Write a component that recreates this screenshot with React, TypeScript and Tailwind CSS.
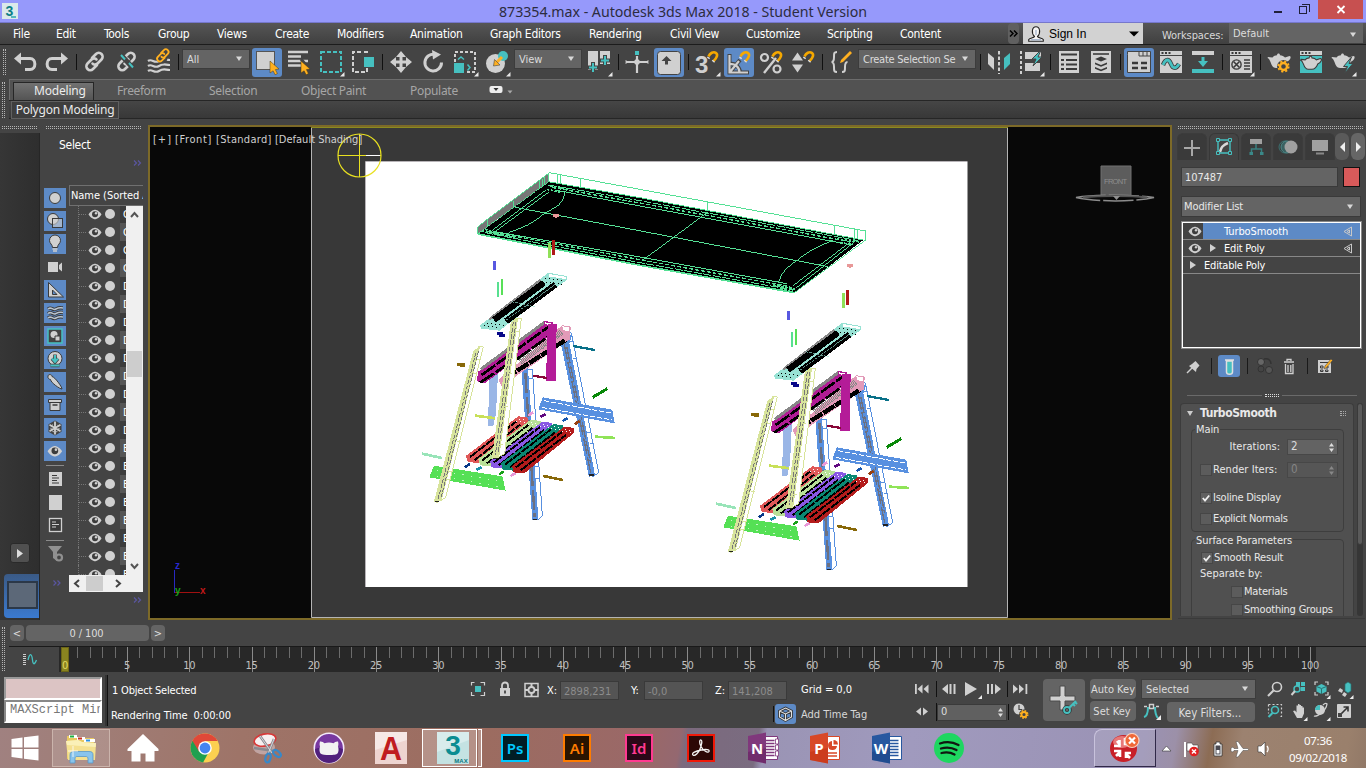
import React from "react";

type Kids = { children?: React.ReactNode };

const UI = "font-['DejaVu_Sans_Condensed','DejaVu_Sans','Noto_Sans',sans-serif]";
const SEG = "font-['Noto_Sans','Open_Sans',sans-serif]";

const G = "#d0d0d0";
const T = "#46c0c0";
const O = "#ffb020";
const D = "#3a3a3a";

/* ---------- small helpers ---------- */

const Tool = ({ children, on, fly }: Kids & { on?: boolean; fly?: boolean }) => (
  <div className="flex h-8 w-8 shrink-0 items-center justify-center">
    <svg width="32" height="32" viewBox="0 0 32 32" fill="none">
      {on && <rect x="1" y="2" width="30" height="29" rx="3" fill="#5d8ac6" />}
      {children}
      {fly && <path d="M29.500 26v4.500H25z" fill="#e8e8e8" />}
    </svg>
  </div>
);

const Sep = () => (
  <div className="flex h-8 w-1.5 shrink-0 items-center justify-center">
    <div className="h-4 w-px bg-[#101010]" />
  </div>
);

const Caret = () => (
  <svg width="8" height="6" viewBox="0 0 8 6" className="shrink-0">
    <path d="M1 0.500h6L4 5z" fill="#d8d8d8" />
  </svg>
);

const Combo = ({ label, box, tight }: { label: string; box: string; tight?: boolean }) => (
  <div className={`flex shrink-0 items-center justify-between overflow-hidden border border-[#3c3c3c] bg-[#646464] pl-[4px] pr-[6px] text-[11px] text-[#dcdcdc] ${UI} ${box}`}>
    <span className={`whitespace-nowrap pt-0.5 ${tight ? "tracking-[-0.25px]" : ""}`}>{label}</span>
    <Caret />
  </div>
);

const GripH = ({ box }: { box: string }) => (
  <div className={`h-[3px] shrink-0 border-y border-dotted border-[#b4b4b4] ${box}`} />
);
const GripV = ({ box }: { box: string }) => (
  <div className={`w-[3px] shrink-0 border-x border-dotted border-[#b4b4b4] ${box}`} />
);

const EyeShape = () => (
  <>
    <path d="M0.500 5.500C3 1.500 6 .8 7 .8s4 .7 6.500 4.700C11 9.500 8 10.200 7 10.200S3 9.500 .5 5.500z" fill={G} />
    <circle cx="7" cy="5.200" r="3" fill="#3c3c3c" />
    <circle cx="8" cy="4.200" r="1.200" fill={G} />
  </>
);
const Eye = () => (
  <svg width="14" height="11" viewBox="0 0 14 11" className="shrink-0">
    <EyeShape />
  </svg>
);

/* ---------- title and menu ---------- */

const TitleBar = () => (
  <div className="flex h-[23px] shrink-0 items-start border-b border-[#7678cc] bg-[#9699fb]">
    <div className="flex w-[200px] pl-0.5 pt-[3px]">
      <svg width="16" height="16" viewBox="0 0 16 16">
        <rect width="16" height="16" fill="#dbe9ea" />
        <text x="3.500" y="12.500" fontSize="14" fontWeight="bold" fontFamily="Liberation Sans" fill="#0e7f86">3</text>
        <path d="M9 14h5" stroke="#2ca6ac" strokeWidth="1.500" />
      </svg>
    </div>
    <div className={`flex-1 text-center text-[14.2px] leading-[23px] tracking-[-0.02px] text-[#2c2c40] ${SEG}`}>
      873354.max - Autodesk 3ds Max 2018 - Student Version
    </div>
    <div className="flex w-[200px] justify-end">
      <svg width="96" height="19" viewBox="0 0 96 19" shapeRendering="crispEdges">
        <path d="M4 12h8" stroke="#20203a" strokeWidth="2" />
        <path d="M31.500 4.500h8v7M29.500 6.500h7v7h-7z" stroke="#20203a" fill="none" />
        <rect x="48" width="45" height="19" fill="#c75050" />
        <path d="M67.500 6l7 7m0-7l-7 7" stroke="#fff" strokeWidth="1.800" shapeRendering="auto" />
      </svg>
    </div>
  </div>
);

const menus: [string, string][] = [
  ["File", "w-[43px]"], ["Edit", "w-[48px]"], ["Tools", "w-[54px]"], ["Group", "w-[59px]"],
  ["Views", "w-[58px]"], ["Create", "w-[62px]"], ["Modifiers", "w-[73px]"], ["Animation", "w-[80px]"],
  ["Graph Editors", "w-[99px]"], ["Rendering", "w-[81px]"], ["Civil View", "w-[76px]"],
  ["Customize", "w-[81px]"], ["Scripting", "w-[73px]"], ["Content", "w-[60px]"],
];

const MenuBar = () => (
  <div className={`flex h-[22px] shrink-0 border-b border-[#1c1c1c] bg-linear-to-b from-[#565656] to-[#404040] pl-[13px] text-[12px] text-white ${UI}`}>
    {menus.map(([m, w]) => (
      <div key={m} className={`shrink-0 whitespace-nowrap leading-[23px] tracking-[-0.28px] ${w}`}>{m}</div>
    ))}
    <div className="ml-[48px] flex w-[11px] items-center justify-center rounded-sm bg-[#606060]">
      <svg width="9" height="7" viewBox="0 0 9 7"><path d="M1 .5l3 3-3 3M5 .5l3 3-3 3" stroke="#000" strokeWidth="1.500" fill="none" /></svg>
    </div>
    <div className="ml-[4px] flex w-[120px] items-center bg-[#d2d2d2] pl-[5px] pr-1 font-['Liberation_Sans',sans-serif] text-[12px] text-black">
      <svg width="16" height="16" viewBox="0 0 16 16">
        <path d="M.7 15.200v-1.700C2 12 6 12 6.500 10.500 3 7 4 .8 8 .8s5 6.200 1.500 9.700c.5 1.500 4.500 1.500 5.800 3v1.700z" fill="#f6f6f6" stroke="#222" strokeWidth="1.100" />
        <path d="M3 13.800h10M8 4v5" stroke="#8ba0c0" />
      </svg>
      <span className="ml-[5px] flex-1 pt-px">Sign In</span>
      <svg width="10" height="6" viewBox="0 0 10 6"><path d="M0 .5h10L5 5.500z" fill="#000" /></svg>
    </div>
    <div className="w-[86px] pl-[19px] text-[11px] leading-[25px] text-[#d8d8d8] tracking-[-0.1px]">Workspaces:</div>
    <div className="flex h-[20px] w-[134px] items-center justify-between bg-[#646464] pl-1 pr-1.5 pt-[3px] text-[11px] text-[#dcdcdc]">
      <span>Default</span>
      <Caret />
    </div>
  </div>
);

/* ---------- main toolbar ---------- */

const Magnet = ({ x = 0, y = 0 }: { x?: number; y?: number }) => (
  <g transform={`translate(${x} ${y})`}>
    <path d="M1.500 5.500C3 2 6.500 .3 8.800 1.800s1.500 4.500-2.300 8.400" stroke="#f5a800" strokeWidth="2.600" />
    <path d="M.3 6.200l2.400 1.400M5.200 9.200l2.400 2" stroke="#ddd" strokeWidth="1.400" />
  </g>
);

const Link = ({ c = G, x = 0, y = 0, s = 1 }: { c?: string; x?: number; y?: number; s?: number }) => (
  <g transform={`translate(${x} ${y}) scale(${s})`} stroke={c} strokeWidth="2.600" strokeLinecap="round">
    <path d="M13 12l4-4c1.500-1.500 4-1.500 5.500 0s1.500 4 0 5.500l-4 4c-1.500 1.500-4 1.500-5 0" />
    <path d="M19 20l-4 4c-1.500 1.500-4 1.500-5.500 0s-1.500-4 0-5.500l4-4c1.500-1.500 4-1.500 5 0" transform="translate(-1 -1)" />
  </g>
);

const Cursor = ({ x, y }: { x: number; y: number }) => (
  <path transform={`translate(${x} ${y})`} d="M0 0l9 8-3.600.6 2 4-2.300 1.200-2-4L0 12z" fill={O} stroke="#4a3a10" strokeWidth=".5" />
);

const Teapot = () => (
  <path d="M5 11l4.500.5c1-1.500 3-2 4.500-2.200 0-2.300 3-2.300 3 0 2 .2 4 1 5 2.200l4.500-1.500c2.300.3 1 4.500-3 6-.7 3-3.500 6-6.500 6h-4c-3 0-4.500-3-5.500-6-1-2.500-1.500-3.500-3-4z" fill={G} />
);

const MainToolbar = () => (
  <div className="flex h-[34px] shrink-0 items-start bg-[#444] pl-[3px] pt-px">
    <GripV box="mr-[3px] mt-[3px] h-[26px]" />
    <Tool><path d="M9 12.500h12c6.500 0 6.500 11 0 11h-5" stroke={G} strokeWidth="3" /><path d="M5 12.500l7-6v12z" fill={G} /></Tool>
    <Tool><path d="M23 12.500H11c-6.500 0-6.500 11 0 11h5" stroke={G} strokeWidth="3" /><path d="M27 12.500l-7-6v12z" fill={G} /></Tool>
    <Sep />
    <Tool><Link /></Tool>
    <Tool><Link /><path d="M10 9l12 13" stroke="#444" strokeWidth="5" /><path d="M10 9l4 4.500M18 17l4 4.500" stroke={T} strokeWidth="2" /></Tool>
    <Tool>
      <path d="M5 15c4-3 6 3 11 0s6-1 11-1M5 20c4-3 6 3 11 0s6-1 11-1M5 25c4-3 6 3 11 0s6-1 11-1" stroke={G} strokeWidth="2.200" />
      <circle cx="19" cy="12" r="5.500" fill="#444" /><Link c={O} x={9} y={-1.500} s={0.7} />
    </Tool>
    <Sep />
    <Combo label="All" box="mx-px mt-[3px] h-5 w-[68px]" />
    <Tool on><rect x="5.500" y="5.500" width="18" height="18" fill={G} stroke="#555" /><Cursor x={19} y={15} /></Tool>
    <Tool><path d="M5 6h20M5 10.500h13M5 15h20M5 19.500h13" stroke={G} strokeWidth="2.600" /><path d="M18 13l9 11" stroke="#444" strokeWidth="3" /><Cursor x={18} y={15} /></Tool>
    <Tool fly><rect x="6" y="6" width="20" height="20" stroke={T} strokeWidth="2" strokeDasharray="4 2" /></Tool>
    <Tool><path d="M14 6H6v20h14v-4M17 6h3v3" stroke={G} strokeWidth="2" strokeDasharray="4 2" /><rect x="17" y="11" width="10" height="10" fill={T} /></Tool>
    <Sep />
    <Tool><path d="M16 7v18M7 16h18" stroke={G} strokeWidth="3" /><path d="M16 5l5 6h-10zM16 27l5-6h-10zM5 16l6-5v10zM27 16l-6-5v10z" fill={G} /></Tool>
    <Tool><path d="M18 8.500a8.300 8.300 0 1 0 6.500 8" stroke={G} strokeWidth="3" /><path d="M15 4l9 4.500-8 5z" fill={G} /></Tool>
    <Tool fly><rect x="6" y="6" width="20" height="20" stroke={G} strokeWidth="2" strokeDasharray="3 2" /><path d="M4 16h12v12H4z" fill="#444" /><rect x="5" y="17" width="10" height="10" fill={T} /><path d="M9 13.500l3-2.500 3 2.500M18.500 18.500l2.500 3-2.500 3" stroke={T} strokeWidth="1.500" /></Tool>
    <Tool fly><circle cx="14.500" cy="17.500" r="9.500" fill={G} /><circle cx="22" cy="10" r="5" fill={T} /><path d="M21 11l-6 6" stroke={O} strokeWidth="3" /><path d="M12.500 20l1-6.500 5.500 5.500z" fill={O} stroke="#444" strokeWidth=".6" /></Tool>
    <Combo label="View" box="mx-px mt-[3px] h-5 w-[68px]" />
    <Tool fly><path d="M5 5h10v19H5zM17 5h10v13H17z" fill={G} /><path d="M10 16v11M5 21.500h11M22 9v11M17 14.500h11" stroke="#444" strokeWidth="4" /><path d="M10 17v9M6 21.500h8M22 10v9M18 14.500h8" stroke={T} strokeWidth="2" /></Tool>
    <Sep />
    <Tool><path d="M5 16h22M16 10v17" stroke={G} strokeWidth="2.200" /><path d="M14 14h4v4h-4zM5 14v4M27 14v4" fill={G} stroke={G} strokeWidth=".8" /><rect x="14" y="5" width="4" height="4" fill={T} /></Tool>
    <Tool on><rect x="4.500" y="5.500" width="23" height="23" rx="3" fill={G} stroke="#444" /><path d="M13.500 10l5 5h-3.500v3.500h-3v-3.500H8.500z" fill="#444" /></Tool>
    <Sep />
    <Tool fly><text x="4" y="27" fontSize="24" fontWeight="bold" fontFamily="Liberation Sans" fill={G}>3</text><Magnet x={16} y={5} /></Tool>
    <Tool on><path d="M6.500 8v18.500H26M7 26L17 14M6.500 17.500c6-.5 10.500 4 10.500 9" stroke="#444" strokeWidth="4" /><path d="M6.500 9v17.500H25M7 26L16 15M6.500 18c6-.5 10 3.500 10 8.500" stroke={G} strokeWidth="2.200" /><Magnet x={16} y={5} /></Tool>
    <Tool><circle cx="9.500" cy="11.500" r="3.500" stroke={G} strokeWidth="2.200" /><circle cx="22" cy="23" r="3.500" stroke={G} strokeWidth="2.200" /><path d="M21 12L9 27" stroke={G} strokeWidth="2.400" /><Magnet x={16} y={5} /></Tool>
    <Tool><path d="M5 14.500l5.500-8 5.500 8zM5 18.500l5.500 8 5.500-8z" fill={G} /><Magnet x={16} y={5} /></Tool>
    <Sep />
    <Tool><path d="M12 6c-3 0-3 1-3 5 0 3-1 5-2.500 5C8 16 9 18 9 21c0 4 0 5 3 5M17 26c3 0 3-1 3-5 0-3 1-5 2.500-5" stroke={G} strokeWidth="2" /><path d="M15 17l1-3 9-9 2 2-9 9z" fill={O} /></Tool>
    <Combo label="Create Selection Se" tight box="mx-px mt-[3px] h-5 w-[118px]" />
    <Sep />
    <Tool><path d="M5 7l6 5v12l-6-6z" fill={G} /><path d="M16 5v23" stroke={G} strokeWidth="2" strokeDasharray="3.500 2" /><path d="M27 7l-6 5v12l6-6z" fill={T} /></Tool>
    <Tool fly><path d="M6 5v23" stroke={G} strokeWidth="2" strokeDasharray="3 2" /><path d="M10 6h16v7H10zM10 17h15v8H10z" fill={G} /><path d="M26 4l-9 9h4l-3 7 9-9h-4z" fill={T} stroke="#444" strokeWidth="1" /></Tool>
    <Sep />
    <Tool><rect x="6" y="5" width="20" height="22" fill={G} /><path d="M8 8.500h16M8 14h3M13 14h11M8 18.500h3M13 18.500h11M8 23h3M13 23h11" stroke={D} strokeWidth="2" /></Tool>
    <Tool><rect x="6" y="5" width="20" height="22" fill={G} /><path d="M8 8h16" stroke={D} strokeWidth="1.600" /><path d="M16 10.500l6 2.500-6 2.500-6-2.500zM10 16.500l6 2.500 6-2.500v1.700l-6 2.500-6-2.500zM10 21l6 2.500 6-2.500v1.700l-6 2.500-6-2.500z" fill={D} /></Tool>
    <Sep />
    <Tool on><path d="M4.500 8.500V5.500h23v21h-23z" fill={G} stroke="#444" /><path d="M16 6v4h12M20 6v4M24 6v4" stroke="#444" /><path d="M9 17h6M18 17h6M9 22h6M18 22h6" stroke={D} strokeWidth="2.400" /></Tool>
    <Tool><path d="M5 5h22v4H5zM5 10h22v17H5z" fill={G} /><path d="M6.500 7h2M10 7h2M13.500 7h2" stroke={D} strokeWidth="2" /><path d="M8 19c3-7 6-6 8-1s5 5 8 0" stroke={D} strokeWidth="4.500" /><path d="M8 19c3-7 6-6 8-1s5 5 8 0" stroke={T} strokeWidth="2.800" /></Tool>
    <Tool><path d="M5 5h22v4H5z" fill={G} /><path d="M5 23h22v4H5z" fill={T} /><path d="M14.500 11h3v4h3.500l-5 6-5-6h3.500z" fill={T} /></Tool>
    <Sep />
    <Tool fly><path d="M5 5h22v4H5zM5 10h22v17H5z" fill={G} /><path d="M6.500 7h2M10 7h2M13.500 7h2" stroke={D} strokeWidth="2" /><circle cx="11.500" cy="18.500" r="4.600" fill={G} stroke={D} strokeWidth="1.400" /><path d="M8.500 15.500l6 6m0-6l-6 6" stroke={D} strokeWidth="1.600" /><path d="M19 14h6M19 17h6M19 20h6M19 23h6" stroke={D} strokeWidth="1.400" /></Tool>
    <Sep />
    <Tool><Teapot /><circle cx="20.500" cy="20.500" r="6.500" fill="#444" /><circle cx="20.500" cy="20.500" r="3.500" stroke={O} strokeWidth="2.400" /><circle cx="20.500" cy="20.500" r="5.200" stroke={O} strokeWidth="1.800" strokeDasharray="2.100 2" /></Tool>
    <Tool><path d="M5 5h22v4H5z" fill={G} /><path d="M5 10h22v17H5z" fill={T} /><path d="M6.500 7h2M10 7h2M13.500 7h2" stroke={D} strokeWidth="2" /><g transform="translate(1.600 3.500) scale(.9)" stroke={D} strokeWidth="1.200"><Teapot /></g></Tool>
    <Tool fly><Teapot /><path d="M24.500 11l-8 9.500h4l-3 7 8.500-10h-4z" fill={T} stroke="#444" strokeWidth="1" /></Tool>
  </div>
);

/* ---------- ribbon ---------- */

const Ribbon = () => (
  <div className={`flex h-[46px] shrink-0 bg-[#444] text-[12px] ${SEG}`}>
    <GripV box="ml-0.5 mt-[3px] h-[36px]" />
    <div className="ml-1 flex h-[40px] flex-1 flex-col">
      <div className="flex h-[21px] items-end border-l border-t border-[#6c6c6c] bg-[#525252] pl-[3px] leading-[18px] text-[#a6a6a6]">
        <div className="h-[18px] w-[81px] border-x border-t border-[#262626] bg-linear-to-b from-[#727272] to-[#545454] pl-5 leading-[16px] text-[#ececec] tracking-[-0.2px]">Modeling</div>
        <div className="w-[92px] pl-[23px] tracking-[-0.4px]">Freeform</div>
        <div className="w-[92px] pl-[23px] tracking-[-0.3px]">Selection</div>
        <div className="w-[109px] pl-[23px] tracking-[-0.3px]">Object Paint</div>
        <div className="w-[102px] pl-[23px] tracking-[-0.3px]">Populate</div>
        <svg width="24" height="18" viewBox="0 0 24 18">
          <rect x="0.500" y="4" width="13" height="7" rx="2" fill="#eee" /><path d="M4.500 6h5L7 9z" fill="#333" /><path d="M18.500 8.500h5L21 11.500z" fill="#aaa" />
        </svg>
      </div>
      <div className="flex h-[19px] border-y border-[#262626] bg-linear-to-b from-[#464646] to-[#383838]">
        <div className="ml-0.5 h-[18px] w-[108px] border border-[#606060] bg-[#3e3e3e] text-center leading-[16px] text-[#eaeaea] tracking-[-0.22px]">Polygon Modeling</div>
      </div>
    </div>
  </div>
);

/* ---------- scene explorer ---------- */

const filters: [boolean, React.ReactNode][] = [
  [true, <circle cx="11" cy="10" r="5.500" fill={G} stroke={D} />],
  [true, <><circle cx="9" cy="8" r="5.500" fill={G} stroke={D} /><rect x="8.500" y="7.500" width="10" height="9" fill={G} fillOpacity=".6" stroke={D} /></>],
  [true, <><path d="M8.500 13.500c0-3-3-4-3-7a5.500 5.500 0 0 1 11 0c0 3-3 4-3 7z" fill={G} stroke={D} /><path d="M8.500 15h5M9 17h4" stroke={G} strokeWidth="1.500" /></>],
  [false, <path d="M4 5h10v10H4zM15 8l3-2.500v9L15 12z" fill={G} />],
  [true, <><path d="M4.500 2.500v14.500h15z" fill={G} stroke={D} /><path d="M8.500 10v4.500h4.500z" fill="#5d8ac6" stroke={D} /></>],
  [true, <path d="M4 6c4-3 4 2 8 0s4-1 7-1M4 10.500c4-3 4 2 8 0s4-1 7-1M4 15c4-3 4 2 8 0s4-1 7-1" stroke={D} strokeWidth="3.400" />],
  [true, <><rect x="4" y="3" width="14" height="14" fill="#444" stroke={T} strokeWidth="1.500" /><circle cx="10" cy="8.500" r="3.500" fill={G} /><path d="M11 10h5v5h-5z" fill={G} stroke={D} /></>],
  [true, <><circle cx="11" cy="9.500" r="7" fill={G} stroke={D} /><path d="M11 5.500v7M8 9.500l3 3.500 3-3.500M6.500 16.500h9" stroke="#444" strokeWidth="3.600" /><path d="M11 6v7M8 9.500l3 3.500 3-3.500M6.500 16.500h9" stroke={T} strokeWidth="2" /></>],
  [true, <path d="M4 4c0-2 4-2 4 .5C11 5 18 15 18 17c-2 0-11-6-11.500-9.500C5 7.500 3.500 6 4 4z" fill={G} stroke={D} />],
  [true, <><path d="M4.500 4.500h13v3h-13zM6 7.500h10v8H6z" fill={G} stroke={D} /><path d="M8.500 10h5" stroke={D} strokeWidth="1.500" /></>],
  [true, <><path d="M11 2.500l6.500 3.700v7.600L11 17.500l-6.500-3.700V6.200z" fill="#444" /><path d="M11 3.500v13M5.500 6.800l11 6.400M16.500 6.800l-11 6.400" stroke={G} strokeWidth="1.800" /><circle cx="11" cy="10" r="4" stroke={G} strokeDasharray="2 1.500" /></>],
  [true, <g transform="translate(3 4) scale(1.120)"><EyeShape /></g>],
];

const Chev2 = ({ box }: { box: string }) => (
  <svg width="9" height="6" viewBox="0 0 9 6" className={box}><path d="M1 .5L3.500 3 1 5.500M5 .5L7.500 3 5 5.500" stroke="#5a56a0" fill="none" strokeWidth="1.200" /></svg>
);

const rowNames = "GCCCDDDDDDDDDEEEEEEEE".split("");

const SceneExplorer = () => (
  <div className={`flex w-[108px] shrink-0 flex-col bg-[#444] ${UI}`}>
    <GripH box="ml-1.5 mt-px w-[95px]" />
    <div className="mt-[8px] pl-[19px] text-[12px] leading-4 tracking-[-0.3px] text-white">Select</div>
    <Chev2 box="ml-[93px] mt-[7px]" />
    <div className="mt-[19px] flex">
      <div className="ml-1 mt-[3px] flex w-[22px] flex-col gap-[3px]">
        {filters.map(([on, shape], i) => (
          <div key={i} className={`h-5 w-[22px] ${on ? "bg-[#5d8ac6]" : ""}`}>
            <svg width="22" height="20" viewBox="0 0 22 20" fill="none">
              {shape}
              {i === 5 && <path d="M4 6c4-3 4 2 8 0s4-1 7-1M4 10.500c4-3 4 2 8 0s4-1 7-1M4 15c4-3 4 2 8 0s4-1 7-1" stroke="#b8c4d0" strokeWidth="1.500" />}
            </svg>
          </div>
        ))}
        <svg width="22" height="124" viewBox="0 0 22 124" fill="none" className="-mt-px">
          <path d="M2 2.500h18M2 77.500h18" stroke="#8a8a8a" />
          <path d="M5 9h13v14H5zM5 32h13v15H5z" fill={G} />
          <path d="M8 12.500h5M8 15h7M8 17.500h5M8 20h7" stroke={D} />
          <rect x="5.500" y="55.500" width="12" height="13" fill="#3a3a3a" stroke={G} strokeWidth="1.300" />
          <path d="M8 59h4M8 61.500h7M8 64h4" stroke={G} />
          <path d="M4 83h14l-5 6v9l-4-3v-6z" fill="#909090" /><circle cx="15" cy="94.500" r="3" stroke="#909090" strokeWidth="2.200" fill="#444" />
          <path d="M9.500 117.500l2.500 2.500-2.500 2.500M13.500 117.500l2.500 2.500-2.500 2.500" stroke="#5a56a0" strokeWidth="1.200" />
        </svg>
      </div>
      <div className="ml-[3px] flex w-[74px] flex-col">
        <div className="flex h-[21px] items-center overflow-hidden whitespace-nowrap border border-r-0 border-[#707070] bg-[#444] pl-px pt-px text-[11px] text-white tracking-[-0.050px]">
          <span>Name (Sorted A</span>
        </div>
        <div className="flex h-[369px]">
          <div className="flex w-[57px] flex-col overflow-hidden">
            <div className="-mt-px flex flex-col">
              {rowNames.map((c, i) => (
                <div key={i} className="flex h-[18px] shrink-0 items-center text-[11px] leading-[19px] text-white">
                  <div className="ml-[9px] h-[18px] w-2 shrink-0 border-l border-dotted border-[#777]">
                    <div className="mt-[9px] border-t border-dotted border-[#777]" />
                  </div>
                  <div className="ml-[2px] flex shrink-0"><Eye /></div>
                  <div className="ml-[3px] size-[10px] shrink-0 rounded-full bg-[#d0d0d0]" />
                  <div className={`ml-[5px] h-[18px] w-2.5 shrink-0 pl-[3px] ${i % 2 ? "bg-[#555]" : "bg-[#3c3c3c]"}`}>{c}</div>
                </div>
              ))}
            </div>
          </div>
          <div className="flex w-[17px] flex-col bg-[#f0f0f0]">
            <svg width="17" height="17" viewBox="0 0 17 17"><path d="M5 11l3.500-4 3.500 4" stroke="#555" strokeWidth="2" fill="none" /></svg>
            <div className="ml-px mt-[128px] h-[26px] w-[15px] bg-[#cdcdcd]" />
            <svg width="17" height="17" viewBox="0 0 17 17" className="mt-auto"><path d="M5 6l3.500 4L12 6" stroke="#555" strokeWidth="2" fill="none" /></svg>
          </div>
        </div>
        <div className="flex h-[17px] items-center bg-[#f0f0f0]">
          <svg width="17" height="17" viewBox="0 0 17 17"><path d="M10 5L6 8.500l4 3.500" stroke="#444" strokeWidth="2" fill="none" /></svg>
          <div className="h-[15px] w-[17px] bg-[#cdcdcd]" />
          <svg width="17" height="17" viewBox="0 0 17 17" className="ml-[6px]"><path d="M7 5l4 3.500L7 12" stroke="#444" strokeWidth="2" fill="none" /></svg>
        </div>
        <Chev2 box="ml-[64px] mt-[5px]" />
      </div>
    </div>
  </div>
);

/* ---------- viewport ---------- */

const TableTop = () => (
  <g>
    <path d="M205 222L415 65 690 113 1360 240 1153 398 690 316z" fill="#000" />
    <path d="M418 38L203 200v22L415 66z" fill="#777" />
    <g stroke="#55e095" strokeWidth="3" fill="none">
      <path d="M203 222v-22L418 38 1367 213v27L1153 398" />
      <path d="M1153 398L690 316 203 222" strokeWidth="5" />
      <path d="M415 38v27L690 113 1360 240" />
      <path d="M435 90L690 138l600 110M250 214L690 291l440 80" />
      <path d="M415 75L690 122 1345 242M225 218L690 308l460 82" strokeDasharray="24 5" />
      <path d="M425 82L690 129l640 118M235 214L690 299l450 81" strokeWidth="4" strokeDasharray="12 6" />
      <path d="M315 142L640 203l615 117M895 155L695 303" />
      <path d="M465 95c-6 40-25 45-62 65-40 35-60 40-105 57M1270 240c-50 22-70 30-110 62-40 28-45 40-55 66" />
      <path d="M408 90L245 212M418 95L255 215M1322 245L1148 378M1332 247L1158 384" />
      <path d="M205 220L415 66" strokeDasharray="20 4" />
      <path d="M443 44v26M451 45v26M511 55v26M892 127v26M1275 196v26M1333 208v26M1342 210v26M232 180v22M310 122v22M390 61v24M397 56v24M405 50v24" />
      <path d="M215 212l100 22M225 208l60 22M1280 236l70 10M1290 248l40 6M1090 375l66 12M1110 386l40 8M420 78l60 12M410 88l40 8" strokeWidth="5" strokeDasharray="8 4" />
    </g>
  </g>
);

const slats: [string, number, number][] = [
  ["#e05858", 168, 895], ["#b8e098", 205, 905], ["#8a58e4", 240, 911], ["#0a8872", 273, 918], ["#b41c1c", 306, 926],
];

const Trestle = () => (
  <g>
    {/* rear legs */}
    <g stroke="#5890e0" strokeWidth="3">
      <path d="M470 522L484 518 566 938l-18 13z" fill="#fff" />
      <path d="M452 548l14-22 20 0-8 24 77 395-18 6z" fill="#5890e0" stroke="none" />
      <path d="M462 550l80 388M470 560l72 350" stroke="#6c7080" strokeWidth="4" strokeDasharray="50 8" />
      <path d="M478 545h13M488 595h12M532 818h12M540 850h12" />
      <path d="M352 628h15l30 440-14 12z" fill="#fff" />
      <path d="M334 625h20l31 450-18 6z" fill="#5890e0" stroke="none" />
      <path d="M346 640l28 430" stroke="#6c7080" strokeWidth="7" strokeDasharray="60 10" />
      <path d="M358 655h10M374 920h13M378 955h12" />
    </g>
    <path d="M536 945h16M368 1078h14" stroke="#222" strokeWidth="4" />
    {/* braces */}
    <path d="M238 650l26-12-6 122-8 38h-16z" fill="#9ab6e6" />
    <path d="M398 712l209 37 7 41-229-42z" fill="#5890e0" />
    <path d="M402 722l200 37M395 742l212 38" stroke="#fff" strokeWidth="3" strokeDasharray="16 5" />
    {/* shelf */}
    {slats.map(([c, x, y]) => (
      <g key={c}>
        <path d={`M${x} ${y - 8}l157-118 30 4v14l-150 122-32-3z`} fill={c} />
        <path d={`M${x + 12} ${y - 4}l138-106M${x + 26} ${y + 5}l136-106`} stroke="#000" strokeWidth="6" strokeDasharray="28 3" />
        <path d={`M${x + 150} ${y - 112}l32 4M${x + 158} ${y - 118}l24 4`} stroke="#fff" strokeWidth="3" strokeDasharray="3 9" />
      </g>
    ))}
    {/* cross beams */}
    <path d="M265 660L455 497l27 5-2 36-205 140z" fill="#e29ab8" />
    <path d="M330 605l126-90" stroke="#888" strokeWidth="18" strokeDasharray="3 2" />
    <path d="M285 655l182-115" stroke="#000" strokeWidth="13" strokeDasharray="40 3" />
    <path d="M455 497l25 4-2 14-20-3z" fill="#fff" stroke="#e29ab8" strokeWidth="3" />
    <path d="M203 636L402 483l28 4-6 36-200 147-22-6z" fill="#b01c94" />
    <path d="M212 628L405 486" stroke="#888" strokeWidth="9" />
    <path d="M215 645L420 497M210 668L300 608M320 598l95-68" stroke="#000" strokeWidth="8" strokeDasharray="50 6" />
    <path d="M402 485l24 4-4 9-18-5z" fill="#fff" stroke="#b01c94" strokeWidth="3" />
    <path d="M413 492h27l-3 170h-29z" fill="#b41c98" />
    {/* side rail */}
    <path d="M72 917l205 32 10 43-229-40z" fill="#55e055" />
    <path d="M80 930l180 32M80 948l190 32" stroke="#fff" strokeWidth="2" strokeDasharray="4 22" />
    {/* front legs */}
    <g stroke="#d8e49c" strokeWidth="3">
      <path d="M205 560h15L107 1012 80 1028z" fill="#fff" />
      <path d="M190 572l20-12L95 1022l-24 6z" fill="#d8e49c" stroke="none" />
      <path d="M198 578L84 1018M206 572L94 1010" stroke="#777" strokeWidth="3" strokeDasharray="12 5" />
      <path d="M200 600h12M190 640h12M118 935h12M112 960h12M142 845h10" />
      <path d="M318 475h16l-50 405-24 15z" fill="#fff" />
      <path d="M304 475h20l-56 415-23 8z" fill="#d8e49c" stroke="none" />
      <path d="M310 485L256 885M318 485L264 880" stroke="#777" strokeWidth="3" strokeDasharray="14 5" />
      <path d="M318 515h10M295 640h12M280 740h14M268 855h12" />
    </g>
    <path d="M74 1026h12M250 896h14" stroke="#222" strokeWidth="3" />
    {/* seat */}
    <path d="M210 496L415 338l55 10v12L268 512l-54-6z" fill="#98e2d4" />
    <path d="M238 478L392 360" stroke="#888" strokeWidth="8" />
    <path d="M252 480L402 368M288 484L436 374" stroke="#000" strokeWidth="19" />
    <path d="M255 490L430 362M270 494L440 370M305 425l70 16" stroke="#98e2d4" strokeWidth="2" strokeDasharray="8 3" />
    <path d="M222 496l48 8M232 490l50 6M395 365l60 8M405 355l54 6" stroke="#000" strokeWidth="3" strokeDasharray="3 9" />
    <path d="M415 340l54 9v10l-52-8z" fill="#fff" stroke="#98e2d4" strokeWidth="3" />
    {/* fasteners */}
    <g fill="none" strokeWidth="8">
      <ellipse cx="438" cy="167" rx="9" ry="6" fill="#e89898" />
      <path d="M418 250v45" stroke="#90e058" />
      <path d="M430 240v46" stroke="#b01818" />
      <path d="M253 303v27" stroke="#5858e0" />
      <path d="M264 366v45" stroke="#58e090" strokeWidth="6" />
      <path d="M275 357v47" stroke="#58e058" strokeWidth="6" />
      <path d="M262 521h18M268 526h16" stroke="#080888" />
      <path d="M142 613h22M150 616h14" stroke="#886808" />
      <path d="M490 558l64 12" stroke="#087088" strokeWidth="7" />
      <path d="M548 712l44-26" stroke="#088808" strokeWidth="9" />
      <path d="M370 647l40 7" stroke="#880838" strokeWidth="7" />
      <path d="M196 767l60 8" stroke="#c8e058" />
      <path d="M556 830l60 4" stroke="#90e458" />
      <path d="M36 881l60 13" stroke="#98e4b8" />
      <path d="M400 948l58 12" stroke="#886808" />
      <path d="M164 922l16-10" stroke="#083888" />
      <path d="M199 930l16-9" stroke="#1890a8" />
      <path d="M268 943l13-9" stroke="#18a018" />
      <path d="M302 948l15-9M355 766l15-9" stroke="#e898d8" />
      <path d="M391 771l16-9" stroke="#600880" />
      <path d="M458 783l15-9" stroke="#1858b0" />
      <path d="M494 793l14-10" stroke="#984010" />
    </g>
  </g>
);

const Viewport = () => (
  <div className="relative w-[1024px] shrink-0 border-2 border-[#7d6a28] bg-[#080808]">
    <svg width="1020" height="491" viewBox="150 127 1020 491" className="block">
      <rect x="311" y="125" width="697" height="493" fill="#383838" />
      <path d="M311.500 127V617.500H1007.500V127" fill="none" stroke="#b4b4b4" strokeWidth="1" />
      <path d="M311 127.500H1008" fill="none" stroke="#8a8a20" />
      <path d="M365.500 587V161.500H967.500" fill="none" stroke="#b8b4b8" />
      <rect x="366" y="162" width="601.500" height="425" fill="#fff" />
      <g shapeRendering="crispEdges" transform="translate(410 160) scale(.3333333)">
        <TableTop />
        <Trestle />
        <g transform="translate(882 150)"><Trestle /></g>
      </g>
      <circle cx="359.500" cy="155.500" r="21.500" fill="none" stroke="#e8e020" strokeWidth="1.200" />
      <path d="M359.500 134v43M338 155.500h43" stroke="#e8e020" shapeRendering="crispEdges" />
      <path d="M366 155.500h14" stroke="#fff" />
      <g>
        <path d="M1101 166h30v30h-30z" fill="#5c5c5c" stroke="#707070" />
        <text x="1104" y="184" fontSize="7.500" fill="#8e8e8e" fontFamily="Liberation Sans" textLength="23">FRONT</text>
        <path d="M1076 197.500c20-3 58-3 78 0-20 4.500-58 4.500-78 0z" fill="none" stroke="#8c8c8c" strokeDasharray="30 3" strokeWidth="1.500" />
        <path d="M1083 197.500c18-2 46-2 64 0" stroke="#555" fill="none" strokeWidth="2" />
        <path d="M1113 196h7l-3.500 4z" fill="#909090" />
      </g>
      <g shapeRendering="crispEdges">
        <path d="M174.500 592.500V570" stroke="#2828c0" /><path d="M174.500 592.500H200" stroke="#a01010" />
      </g>
      <g fontFamily="Liberation Sans" fontWeight="bold" fontSize="10">
        <text x="175" y="569" fill="#2828d0">z</text><text x="175" y="594" fill="#18a018">y</text><text x="200" y="594" fill="#c01818">x</text>
      </g>
    </svg>
    <div className={`absolute left-[3px] top-[5px] flex whitespace-nowrap text-[11px] leading-[15px] text-[#d0d0d0] ${UI}`}>
      <span className="w-[22px] tracking-[1px]">[+]</span><span className="w-[41px] tracking-[0.6px]">[Front]</span><span className="w-[59px] tracking-[0.3px]">[Standard]</span><span>[Default Shading]</span>
    </div>
  </div>
);

/* ---------- command panel ---------- */

const panelTabs: React.ReactNode[] = [
  <path d="M15 6v16M7 14h16" stroke="#a8a8a8" strokeWidth="2" />,
  <><path d="M9 6h12v13H9z" stroke={T} strokeWidth="1.400" /><path d="M11 18c1-5 3-7 8-9" stroke="#d8d8d8" strokeWidth="2.600" /><path d="M7.500 4.500h3v3h-3zM19.500 4.500h3v3h-3zM7.500 17.500h3v3h-3zM19.500 17.500h3v3h-3z" fill="#444" stroke={T} /></>,
  <><path d="M9 5h12v5H9z" fill="#a0a0a0" /><path d="M15 10v5M10.500 19v-4h10v4" stroke="#3a8080" strokeWidth="1.500" /><path d="M8.500 18h3.500v3H8.500zM19 18h3.500v3H19z" fill="#3a8888" /></>,
  <><circle cx="12" cy="13" r="6" stroke="#3a7070" /><circle cx="14" cy="13" r="6" fill="#3a6060" stroke="#4a8888" /><circle cx="18" cy="13" r="6.500" fill="#a0a0a0" /></>,
  <><path d="M7 6h16v11H7z" fill="#a0a0a0" /><path d="M11 19.500h8" stroke="#888" strokeWidth="2" /></>,
];

const Check = ({ on, off }: { on?: boolean; off?: boolean }) => (
  <div className={`flex size-3 shrink-0 items-center justify-center border border-[#464646] ${off ? "bg-[#5c5c5c]" : "bg-[#606060]"}`}>
    {on && <svg width="8" height="8" viewBox="0 0 8 8"><path d="M.8 4l2.200 2.500L7.200 1.500" stroke="#eee" strokeWidth="1.800" fill="none" /></svg>}
  </div>
);

const Spin = ({ v, dim }: { v: string; dim?: boolean }) => (
  <div className={`flex h-4 w-[51px] items-center justify-between border border-[#474747] pl-[3px] pr-[3px] text-[11.5px] ${dim ? "bg-[#565656] text-[#858585]" : "bg-[#636363] text-[#dcdcdc]"}`}>
    <span>{v}</span>
    <svg width="5" height="9" viewBox="0 0 5 9"><path d="M0 3.500L2.500 0 5 3.500zM0 5.500L2.500 9 5 5.500z" fill={dim ? "#888" : "#ddd"} /></svg>
  </div>
);

const Tri = () => <svg width="10" height="11" viewBox="0 0 10 11" fill="none"><path d="M8.500 1v9L1 5.500zM6.500 4v3L4 5.500z" stroke="#c8c8c8" /></svg>;
const Play = () => <svg width="6" height="8" viewBox="0 0 6 8"><path d="M0 0l6 4-6 4z" fill="#d0d0d0" /></svg>;

const CommandPanel = () => (
  <div className={`flex w-[194px] shrink-0 flex-col overflow-hidden bg-[#444] pl-[5px] text-[11px] text-[#e8e8e8] ${UI}`}>
    <GripH box="ml-px mt-px w-[185px]" />
    <div className="mt-[4px] flex h-[27px]">
      {panelTabs.map((t, i) => (
        <div key={i} className={`mr-0.5 w-[30px] rounded-t-md border-x border-t ${i === 1 ? "border-[#383838] bg-[#444]" : "border-[#3c3c3c] bg-[#3a3a3a]"}`}>
          <svg width="28" height="26" viewBox="1 0 28 26" fill="none">{t}</svg>
        </div>
      ))}
      <div className="ml-[-2px] flex w-[14px] items-center justify-center rounded-md bg-[#5a5a5a]"><svg width="5" height="10" viewBox="0 0 5 10"><path d="M5 0v10L0 5z" fill="#eee" /></svg></div>
      <div className="ml-0.5 flex w-[14px] items-center justify-center rounded-md bg-[#666]"><svg width="5" height="10" viewBox="0 0 5 10"><path d="M0 0v10l5-5z" fill="#eee" /></svg></div>
    </div>
    <div className="mt-[7px] flex h-5">
      <div className="ml-1 w-[157px] border border-[#3a3a3a] bg-[#646464] pl-[3px] leading-[19px] tracking-[-0.1px]">107487</div>
      <div className="ml-[5px] w-[17px] border border-[#111] bg-[#d85a5a]" />
    </div>
    <div className="ml-1 mt-[9px] flex h-[21px] w-[180px] items-center justify-between border border-[#3a3a3a] bg-[#646464] pl-[2px] pr-1.5 tracking-[-0.1px]">
      <span className="pt-0.5">Modifier List</span><Caret />
    </div>
    <div className="ml-1 mt-[4px] h-[128px] w-[181px] border border-[#888]">
      <div className="h-[126px] border border-white text-white">
        <div className="flex h-[17px] items-center border-b border-[#888]">
          <div className="ml-[5px]"><Eye /></div>
          <div className="ml-px flex h-4 flex-1 items-center justify-between bg-[#5d8ac6] pl-[21px] pr-[7px]"><span className="pt-0.5 tracking-[-0.1px]">TurboSmooth</span><Tri /></div>
        </div>
        <div className="flex h-[17px] items-center border-b border-[#888] pl-[5px] pr-[7px]">
          <Eye /><div className="ml-2"><Play /></div><span className="ml-[8px] flex-1 pt-[3px] tracking-[-0.2px]">Edit Poly</span><Tri />
        </div>
        <div className="flex h-[17px] items-center border-b border-[#888] pl-[7px]">
          <Play /><span className="ml-[8px] pt-[3px] tracking-[-0.2px]">Editable Poly</span>
        </div>
      </div>
    </div>
    <svg width="180" height="46" viewBox="1177 349 180 46" fill="none" className="shrink-0">
      <path d="M1187 373l6-6" stroke={G} strokeWidth="1.500" /><path d="M1189 366l7 6 .5-3 3-3.500-4-4.500-3.500 3z" fill={G} />
      <path d="M1211.500 358v16M1247.500 358v16M1307.500 358v16" stroke="#1a1a1a" />
      <rect x="1218" y="355" width="22" height="22" rx="3" fill="#5d8ac6" />
      <path d="M1225 360h9M1226.500 361v11c0 3 6 3 6 0v-11z" fill={T} stroke="#e0e0e0" strokeWidth="1.500" />
      <circle cx="1261" cy="362" r="3.500" fill="#666" stroke="#333" /><path d="M1264 359c5-1 7 2 7 5" stroke="#333" strokeWidth="1.500" /><circle cx="1261" cy="369" r="3" stroke="#333" /><circle cx="1269" cy="370" r="3.500" fill="#555" stroke="#333" />
      <path d="M1284 362h10M1287 361v-1.500h4v1.500M1285.500 364v9.500h7.500V364M1288 365v7M1290.800 365v7" stroke={G} strokeWidth="1.300" />
      <path d="M1318 360h13v13h-13z" fill={G} /><path d="M1320 362.500h9M1320.500 366h2.500v2h-2.500zM1325.500 366h2.500v2h-2.500zM1320.500 370h2.500v1.500h-2.500zM1325.500 370h2.500v1.500h-2.500z" stroke={D} /><path d="M1324 369l1-3 6-7 1.500 1.500-6 7z" fill={O} stroke="#444" strokeWidth=".5" />
    </svg>
    <div className="-mt-[3px] mb-[5px] flex h-[6px] shrink-0 items-center pl-[10px]">
      <div className="h-px w-[75px] bg-[#6a6a6a]" />
      <div className="ml-[3px] h-[3px] w-[14px] border-y border-dotted border-[#ddd]" />
      <div className="ml-[3px] h-px w-[75px] bg-[#6a6a6a]" />
    </div>
    <div className="ml-[3px] flex h-[213px] shrink-0">
      <div className="w-[174px] overflow-hidden rounded-t border border-b-0 border-[#3c3c3c] bg-[#505050]">
        <div className="mt-[2px] flex h-3.5 items-center pl-[6px] pr-[7px]">
          <svg width="6" height="5" viewBox="0 0 6 5"><path d="M0 0h6L3 5z" fill="#ccc" /></svg>
          <span className="ml-[7px] flex-1 text-[12px] font-bold tracking-[-0.4px]">TurboSmooth</span>
          <div className="flex flex-col gap-px">
            <div className="w-[6px] border-t border-dotted border-[#aaa]" /><div className="w-[6px] border-t border-dotted border-[#aaa]" /><div className="w-[6px] border-t border-dotted border-[#aaa]" />
          </div>
        </div>
        <div className="ml-[10px] mt-[9px] h-[103px] w-[153px] rounded-sm border border-[#3e3e3e] tracking-[-0.100px]">
          <div className="-mt-[7px] ml-[3px] w-fit bg-[#505050] px-px leading-[14px]">Main</div>
          <div className="mt-[2px] flex h-4 items-center justify-end pr-[5px]"><span className="mr-[7px] pt-px tracking-[0px]">Iterations:</span><Spin v="2" /></div>
          <div className="mt-[7px] flex h-4 items-center pl-[8px] pr-[5px]"><Check off /><span className="ml-px flex-1 tracking-[0.05px]">Render Iters:</span><Spin v="0" dim /></div>
          <div className="mt-[12px] flex h-4 items-center pl-[8px]"><Check on /><span className="ml-px tracking-[-0.25px]">Isoline Display</span></div>
          <div className="mt-[5px] flex h-4 items-center pl-[8px]"><Check off /><span className="ml-px tracking-[-0.35px]">Explicit Normals</span></div>
        </div>
        <div className="ml-[10px] mt-[7px] h-[103px] w-[153px] rounded-sm border border-[#3e3e3e] tracking-[-0.200px]">
          <div className="-mt-[7px] ml-[3px] w-fit bg-[#505050] px-px leading-[15px] tracking-[-0.08px]">Surface Parameters</div>
          <div className="mt-[2px] flex h-4 items-center pl-[9px]"><Check on /><span className="ml-px">Smooth Result</span></div>
          <div className="flex h-4 items-center pl-[8px] tracking-[0px]">Separate by:</div>
          <div className="mt-[2px] flex h-4 items-center pl-[39px]"><Check off /><span className="ml-px">Materials</span></div>
          <div className="mt-[2px] flex h-4 items-center pl-[39px]"><Check off /><span className="ml-px">Smoothing Groups</span></div>
        </div>
      </div>
      <div className="ml-[3px] w-[6px] rounded bg-[#363636]"><div className="h-[142px] rounded border border-[#3a3a3a] bg-[#5a5a5a]" /></div>
    </div>
    <div className="ml-px mt-0.5 h-px w-[187px] bg-[#3a3a3a]" />
  </div>
);

/* ---------- timeline ---------- */

const Timeline = () => (
  <div className={`flex h-[52px] shrink-0 bg-[#444] ${UI}`}>
    <GripV box="ml-0.5 mt-[7px] h-[44px]" />
    <div className="ml-[4px] flex flex-1 flex-col">
      <div className="flex h-[26px] gap-0.5 pl-px pt-[5px] text-center text-[11px] leading-[18px] text-[#ddd]">
        <div className="h-4 w-[14px] rounded-sm bg-[#646464]">&lt;</div>
        <div className="h-4 w-[123px] rounded-sm bg-[#646464] pr-0.5 tracking-[-0.1px]">0 / 100</div>
        <div className="h-4 w-[14px] rounded-sm bg-[#646464]">&gt;</div>
      </div>
      <div className="flex h-[26px] border-t border-[#1a1a1a]">
        <div className="w-[50px] pl-[14px] pt-[7px]">
          <svg width="14" height="11" viewBox="0 0 14 11" fill="none"><path d="M1.500 0v11" stroke="#ccc" strokeWidth="3" strokeDasharray="1 1" /><path d="M5 6c2-9 4-5 4.500 0s2 5 4 0" stroke={T} strokeWidth="1.300" /></svg>
        </div>
        <div className="flex w-[1257px] bg-[#282828]">
          {Array.from({ length: 101 }, (_, i) => (
            <div key={i} className="flex h-[25px] w-0 flex-1 justify-center">
              {i === 0 ? (
                <div className="flex w-[8px] shrink-0 justify-center border border-[#6c6618] bg-[#8a8420] text-[11px] leading-[36px] text-[#e0d860]">
                  <span className="h-[25px]">0</span>
                </div>
              ) : i % 5 === 0 ? (
                <div className="flex shrink-0 flex-col items-center">
                  <div className="h-[12px] w-px bg-[#8a8a8a]" />
                  <div className="h-[13px] bg-[linear-gradient(#8a8a8a,#8a8a8a)] bg-[length:1px_100%] bg-center bg-no-repeat pr-px text-[11px] leading-[13px] text-[#c0c0c0] tracking-[-0.3px]">{i}</div>
                </div>
              ) : (
                <div className="h-[11px] w-px shrink-0 bg-[#6c6c6c]" />
              )}
            </div>
          ))}
        </div>
      </div>
    </div>
  </div>
);

/* ---------- status bar ---------- */

const Coord = ({ l, v }: { l: string; v: string }) => (
  <div className="flex w-[84px] items-center">
    <span className="w-[13px] pt-px text-[11px]">{l}</span>
    <div className="h-[19px] w-[59px] border border-[#3a3a3a] bg-[#545454] pl-[3px] leading-[20px] text-[#8c8c8c]">{v}</div>
  </div>
);

const StatusBar = () => (
  <div className={`flex h-[56px] shrink-0 bg-[#444] text-[11px] text-white ${UI}`}>
    <div className="ml-1 mt-[5px] flex w-[98px] flex-col">
      <div className="h-[23px] border-2 border-[#999] border-b-white border-r-white bg-[#dcc4c4]" />
      <div className="h-[23px] overflow-hidden whitespace-nowrap border-2 border-[#888] border-b-white border-r-white bg-white pl-1 font-['Liberation_Mono',monospace] text-[12px] leading-[17px] text-[#777]">MAXScript Mini</div>
    </div>
    <div className="ml-[3px] mt-[3px] h-[51px] w-[3px] border-r border-[#111] bg-[#333]" />
    <div className="ml-[3px] w-[354px]">
      <div className="mt-[11px] pl-px leading-4 tracking-[-0.2px]">1 Object Selected</div>
      <div className="mt-[9px] whitespace-pre leading-4 tracking-[-0.1px]">Rendering Time  0:00:00</div>
    </div>
    <div className="flex w-[446px] flex-col">
      <div className="mt-[9px] flex h-[19px] items-center">
        <svg width="82" height="19" viewBox="0 0 82 19" fill="none">
          <path d="M6.500 4.500v-3h3M15.500 1.500h4v3M19.500 11v3.500h-4M9.500 14.500h-3V11" stroke={G} strokeWidth="1.200" /><path d="M10 5h6v6h-6z" fill={T} />
          <path d="M35 7h10v8H35z" fill={G} /><path d="M37 7V4.500c0-4 6-4 6 0V7" stroke={G} strokeWidth="1.800" /><path d="M40 9.500v3" stroke="#333" strokeWidth="1.600" />
          <rect x="60" y="2.500" width="13" height="13" stroke={G} strokeWidth="1.500" /><circle cx="66.500" cy="9" r="3" stroke={G} strokeWidth="1.800" /><path d="M66.500 2v4M66.500 12v4M60 9h3.500M70 9h3.500" stroke={G} strokeWidth="2" />
        </svg>
        <Coord l="X:" v="2898,231" /><Coord l="Y:" v="-0,0" /><Coord l="Z:" v="141,208" />
        <span className="ml-[2px] whitespace-nowrap">Grid = 0,0</span>
      </div>
      <div className="mt-[4px] flex h-5 items-center">
        <div className="ml-[308px] h-4 w-px bg-[#111]" />
        <svg width="21" height="20" viewBox="0 0 21 20" fill="none" className="ml-px"><rect width="21" height="20" rx="3" fill="#5d8ac6" /><path d="M10.500 4l6 3v6l-6 3.500-6-3.500V7zM4.500 7l6 3 6-3M10.500 10v6" stroke="#333" strokeWidth="2.800" /><path d="M10.500 4l6 3v6l-6 3.500-6-3.500V7zM4.500 7l6 3 6-3M10.500 10v6" stroke="#e0e0e0" strokeWidth="1.100" /></svg>
        <span className="ml-[5px] pt-0.5 text-[#d8d8d8]">Add Time Tag</span>
      </div>
    </div>
    <div className="flex w-[126px] flex-col">
      <svg width="126" height="31" viewBox="911 672 126 31" fill={G}>
        <path d="M915 684h1.800v10H915zM917.500 689l5-4.500v9zM923.500 689l5-4.500v9z" />
        <path d="M942 689l6-5v10zM949.500 684h2v10h-2zM953.500 684h2v10h-2z" />
        <path d="M965 682l12 7-12 7z" />
        <path d="M987 684h2v10h-2zM991 684h2v10h-2zM995 684l6 5-6 5z" />
        <path d="M1013 684.500l5 4.500-5 4.500zM1019 684.500l5 4.500-5 4.500zM1025.500 684h1.800v10h-1.800z" />
        <path d="M982 695v4h-4z" fill="#eee" />
        <path d="M936 681h1v16h-1zM1007 681h1v16h-1z" fill="#111" />
      </svg>
      <div className="flex h-[18px] items-center">
        <svg width="26" height="18" viewBox="0 0 26 18" fill={G}><path d="M5 8.500l5-4v8zM12 4.500l5 4-5 4z" /><path d="M25 0h1v18h-1z" fill="#111" /></svg>
        <div className="flex h-[17px] w-[70px] items-center justify-between border border-[#3a3a3a] bg-[#606060] pl-[3px] pr-[3px] text-[#ddd]">
          <span className="pt-px">0</span><svg width="5" height="9" viewBox="0 0 5 9"><path d="M0 3.500L2.500 0 5 3.500zM0 5.500L2.500 9 5 5.500z" fill="#ddd" /></svg>
        </div>
        <svg width="26" height="18" viewBox="0 0 26 18" fill="none"><path d="M1.500 1v16" stroke="#111" /><circle cx="12" cy="6" r="5.500" fill={G} /><path d="M12 2v4.500h3" stroke="#444" strokeWidth="1.200" /><circle cx="17" cy="11.500" r="5" fill="#444" /><circle cx="17" cy="11.500" r="2.500" stroke={O} strokeWidth="1.800" /><circle cx="17" cy="11.500" r="3.800" stroke={O} strokeDasharray="1.600 1.400" strokeWidth="1.400" /></svg>
      </div>
    </div>
    <div className="ml-[6px] mt-[7px] flex h-[42px] w-[42px] rounded bg-[#646464]">
      <svg width="42" height="42" viewBox="0 0 42 42" fill="none"><path d="M17 7h5v10h10v5H22v9h-5v-9H7v-5h10z" fill={G} stroke="#4a4a4a" /><circle cx="24" cy="31" r="3" stroke="#333" strokeWidth="3.500" /><circle cx="24" cy="31" r="3" stroke={T} strokeWidth="1.800" /><path d="M26 29l7-7M30 25l2 2M32 23l2 2" stroke={T} strokeWidth="2" /></svg>
    </div>
    <div className="ml-[5px] mt-[7px] flex w-[46px] flex-col gap-[2px] text-center leading-[22px] text-[#ddd]">
      <div className="h-5 whitespace-nowrap rounded bg-[#646464]">Auto Key</div>
      <div className="h-5 whitespace-nowrap rounded bg-[#646464] pr-0.5">Set Key</div>
    </div>
    <div className="ml-[5px] mt-[7px] flex w-[114px] flex-col gap-[3px]">
      <Combo label="Selected" box="h-[20px] w-[115px]" />
      <div className="flex h-5">
        <svg width="26" height="20" viewBox="0 0 26 20" fill="none"><path d="M3 15c4-1 4-8 4-10M14 5c0 4 0 8 3 11" stroke={T} strokeWidth="2" /><path d="M3 4.500h3M8.500 2.500h4v4h-4zM15 4.500h3" stroke={G} strokeWidth="1.400" /><path d="M20 13v5h-5z" fill="#eee" /></svg>
        <div className="w-[88px] rounded bg-[#646464] pr-0.5 text-center text-[11.5px] leading-[22px] text-[#ddd]">Key Filters...</div>
      </div>
    </div>
    <svg width="100" height="48" viewBox="1261 677 100 48" fill="none" className="ml-[6px] mt-[5px]">
      <circle cx="1277" cy="687" r="4.500" stroke={G} strokeWidth="1.600" /><path d="M1273.500 690.500l-5.500 5.500" stroke={G} strokeWidth="2.200" />
      <path d="M1296 682h4v4h-4zM1301 682h4v4h-4zM1301 687h4v4h-4z" fill={T} /><circle cx="1297" cy="689" r="3" stroke={T} strokeWidth="1.500" fill="#444" /><path d="M1295 691l-3.500 4" stroke={G} strokeWidth="2" />
      <path d="M1315 685v-3h3M1325 682h3v3M1328 692v3h-3M1318 695h-3v-3" stroke={G} strokeWidth="1.200" /><path d="M1321.500 684l5 2.500v5l-5 2.500-5-2.500v-5z" fill={T} /><path d="M1316.500 686.500l5 2 5-2M1321.500 689v5" stroke="#2a7070" />
      <path d="M1345 684l3-2 3 2v7l-3 2-3-2z" fill={T} stroke="#2a7070" strokeWidth=".7" /><path d="M1338 691l2-3 3 2-1 3zM1342 695l2-3 3 2-2 3z" fill={G} />
      <path d="M1330.500 695v4h-4zM1353.500 695v4h-4zM1330.500 717v4h-4zM1307.500 717v4h-4z" fill="#eee" />
      <path d="M1268.500 704.500h13v12h-3M1268.500 704.500v9" stroke={G} strokeDasharray="2 2" strokeWidth="1.200" /><circle cx="1275" cy="710" r="3.500" stroke={T} strokeWidth="1.600" /><path d="M1272.500 713l-4 4" stroke={T} strokeWidth="2.200" />
      <path d="M1293 711l2-.5 1.500 2v-7h1.500v-1.500h1.500v1h1.500v1h1.500v1.500h1.500v6l-2 4.500h-5z" fill={G} />
      <circle cx="1320" cy="710" r="5" fill={G} /><path d="M1320 705a5 5 0 0 0-5 5h5z" fill={T} /><path d="M1314 716c2 1 12-4 13-12-1-1-3 0-4 1" stroke={G} strokeWidth="1.300" />
      <path d="M1337.500 704.500h13v13h-13z" fill={G} stroke={G} /><path d="M1338 705h6v2l-6 5z" fill={G} /><path d="M1341.500 713.500l6-6M1343.500 707h4.500v4.500" stroke="#333" strokeWidth="1.600" /><path d="M1338 713h4v4h-4z" fill="#444" />
    </svg>
  </div>
);

/* ---------- taskbar ---------- */

const Slot = ({ children, raised }: Kids & { raised?: boolean }) => (
  <div className={`mx-0.5 flex h-[38px] w-[58px] shrink-0 items-center justify-center ${raised ? "border border-[#cbb4ac] bg-white/15" : ""}`}>
    {children}
  </div>
);

const Adobe = ({ t, box }: { t: string; box: string }) => (
  <div className={`flex size-7 items-center justify-center border-2 text-[15px] font-semibold leading-none ${SEG} ${box}`}>{t}</div>
);

const Office = ({ t, c, dark }: { t: string; c: string; dark: string }) => (
  <svg width="32" height="32" viewBox="0 0 32 32">
    <path d="M17 4.500h13.500v23H17z" fill="#fff" stroke={c} strokeWidth="1" />
    {t === "P" ? (
      <><path d="M23 9a4.500 4.500 0 1 0 5 5h-5z" fill={c} /><path d="M24.500 8v4.500h4.500a4.500 4.500 0 0 0-4.500-4.500z" fill={c} /><path d="M19 21h9M19 24h9" stroke={c} strokeWidth="1.600" /></>
    ) : (
      <path d="M19 8.500h8.500M19 11.500h8.500M19 14.500h8.500M19 17.500h8.500M19 20.500h8.500M19 23.500h8.500" stroke={c} strokeWidth="1.500" />
    )}
    {t === "N" && <path d="M28.500 7h3v5h-3zM28.500 13h3v5h-3zM28.500 19h3v5h-3z" fill="#fff" stroke={c} strokeWidth=".8" />}
    <path d="M1 4l18-3.500v31L1 28z" fill={c} /><path d="M1 20l18-4v15.500L1 28z" fill={dark} opacity=".5" />
    <text x="10" y="21.500" fontSize="15" fontWeight="bold" fill="#fff" textAnchor="middle" fontFamily="Open Sans, Noto Sans">{t}</text>
  </svg>
);

const Taskbar = () => (
  <div className="flex h-[40px] shrink-0 items-center bg-[linear-gradient(100deg,#a08180_0px,#a07e78_80px,#9e7468_240px,#9c6c60_480px,#9a6868_640px,#946870_672px,#7c6a7e_678px,#7a6c80_748px,#9a94b4_756px,#a09abe_900px,#9a92b4_1130px,#9c90a8_1160px,#8c6c54_1195px,#9c8270_1225px,#9a806c_1330px,#8c7464_1366px)]">
    <div className="w-[50px] shrink-0 pl-[11px]">
      <svg width="28" height="26" viewBox="0 0 28 26" fill="#fff"><path d="M.5 4L11.500 2.500v10H.5zM13 2.300L27.500 .5v12H13zM.5 14h11v9.500L.5 22zM13 14h14.500v11.500L13 23.700z" /></svg>
    </div>
    <Slot raised>
      <svg width="34" height="32" viewBox="0 0 34 32">
        <path d="M3 4h9l2 2h16v21H3z" fill="#e8c860" /><path d="M5 3h8v3H5z" fill="#fff" /><path d="M6 3.500h4v2H6z" fill="#20b040" /><path d="M13 5h8v3h-8z" fill="#fff" /><path d="M14 5.500h4v2h-4z" fill="#c83020" /><path d="M20 7h11v3H20z" fill="#fff" /><path d="M22 7.500h4v2h-4z" fill="#3090e0" />
        <path d="M2 9l12-1 4 2 14 1-1 17H4z" fill="#f4e090" /><path d="M2 9l12-1 4 2 14 1-.3 4L3 13z" fill="#faf0b8" />
        <path d="M6 31v-8c0-3 2-3.500 4-3.500h15c3 0 4 1 4 3.500v8h-5v-4c0-2-1-2.500-2-2.500h-9c-1.500 0-2 .5-2 2.500v4z" fill="#88c4ec" stroke="#5898c8" strokeWidth=".8" />
        <path d="M9 14v11M4 19h10" stroke="#fff" strokeWidth="1" opacity=".8" />
      </svg>
    </Slot>
    <Slot><svg width="32" height="30" viewBox="0 0 32 30"><path d="M16 1L.5 16v2h4v10.500h9V20.500h5v8h9V18h4v-2z" fill="#fff" /></svg></Slot>
    <Slot>
      <svg width="30" height="30" viewBox="0 0 30 30"><circle cx="15" cy="15" r="14.500" fill="#fcd050" /><path d="M2.400 7.800a14.500 14.500 0 0 0 10.700 21.600l6-11L15 15z" fill="#20a050" /><path d="M2.400 7.800L9 18.500 15 8h12.600A14.500 14.500 0 0 0 2.400 7.800z" fill="#e04838" /><circle cx="15" cy="15" r="6.800" fill="#fff" /><circle cx="15" cy="15" r="5.400" fill="#4484f0" /></svg>
    </Slot>
    <Slot>
      <svg width="32" height="32" viewBox="0 0 32 32" fill="none"><ellipse cx="13" cy="15.500" rx="11" ry="7" fill="#c0a4a2" /><ellipse cx="14" cy="8" rx="11" ry="6" fill="#f6f0f0" stroke="#d83838" strokeWidth="1.600" transform="rotate(-12 14 8)" /><path d="M9 4l12 17M3 16l20 3M23 7l-6 15" stroke="#8a8a90" strokeWidth="2.600" /><path d="M9 4l12 17M23 7l-6 15" stroke="#d8d8dc" strokeWidth="1" /><ellipse cx="17" cy="26" rx="2.500" ry="4.500" stroke="#3888c8" strokeWidth="2.200" transform="rotate(15 17 26)" /><ellipse cx="26" cy="21.500" rx="2.500" ry="4.500" stroke="#3888c8" strokeWidth="2.200" transform="rotate(-50 26 21.500)" /></svg>
    </Slot>
    <Slot>
      <svg width="32" height="32" viewBox="0 0 32 32"><circle cx="16" cy="16" r="14.700" fill="#7838a0" stroke="#f4e8fa" strokeWidth="1.600" /><path d="M2 17a14 14 0 0 0 28 0c-8-3-20-3-28 0z" fill="#50207c" /><path d="M7 9.500c2-.3 3.500.8 4.500 1.800 3-1 6-1 9 0 1-1 2.500-2.100 4.500-1.800.6 2 .5 3.500 0 5 1 3 .5 5.500-.5 7-1.500 2-14.500 2-17 0-1-1.500-1.500-4-.5-7-.5-1.500-.6-3 0-5z" fill="#f2f2f2" /></svg>
    </Slot>
    <Slot>
      <svg width="32" height="32" viewBox="0 0 32 32"><rect width="32" height="32" fill="#f6e8e6" /><path d="M0 18l32-10v24H0z" fill="#eed4d0" /><text x="16" y="27.500" fontSize="33" fontWeight="bold" textAnchor="middle" fill="#c01c20" fontFamily="Liberation Sans" textLength="22" lengthAdjust="spacingAndGlyphs">A</text></svg>
    </Slot>
    <div className="flex w-[62px] shrink-0 gap-px">
      <div className="flex h-[38px] w-[55px] items-center justify-center border border-white bg-white/25 pl-1.5">
        <svg width="32" height="32" viewBox="0 0 32 32"><rect width="32" height="32" fill="#d8ecec" /><path d="M0 20L32 8v24H0z" fill="#c4e2e2" /><text x="16" y="23" fontSize="28" fontWeight="bold" textAnchor="middle" fill="#0a8c92" fontFamily="Liberation Sans">3</text><text x="24" y="31" fontSize="6" fontWeight="bold" textAnchor="middle" fill="#087880" fontFamily="Liberation Sans">MAX</text></svg>
      </div>
      <div className="h-[38px] w-[4px] border border-l-0 border-white bg-white/25" />
    </div>
    <Slot><Adobe t="Ps" box="border-[#00c8ff] bg-[#001d26] text-[#00c8ff]" /></Slot>
    <Slot><Adobe t="Ai" box="border-[#ff7c00] bg-[#2a1400] text-[#ff7c00]" /></Slot>
    <Slot><Adobe t="Id" box="border-[#ff3a90] bg-[#2a0818] text-[#ff3a90]" /></Slot>
    <Slot>
      <svg width="28" height="28" viewBox="0 0 28 28" fill="none"><rect x="1" y="1" width="26" height="26" fill="#2c0806" stroke="#f01808" strokeWidth="2" /><path d="M6 21c-2-2 3-4 8-5 5-1 9-.5 8 1.500s-6-1-8-5c-2-3.500-1.500-7 0-6.500 1.600.5.600 5-1 9C11.500 19 8 22.500 6 21z" stroke="#f4f4f4" strokeWidth="1.300" /></svg>
    </Slot>
    <Slot><Office t="N" c="#80387c" dark="#60205c" /></Slot>
    <Slot><Office t="P" c="#d84828" dark="#c03010" /></Slot>
    <Slot><Office t="W" c="#2858a0" dark="#184080" /></Slot>
    <Slot>
      <svg width="30" height="30" viewBox="0 0 30 30" fill="none"><circle cx="15" cy="15" r="15" fill="#1ed760" /><path d="M6 10.500c6-2 13-1.500 18.500 1.500M7 15.500c5-1.500 11-1 15.500 1.500M7.500 20c4.500-1 9-.8 13 1.500" stroke="#101810" strokeWidth="2.300" strokeLinecap="round" /></svg>
    </Slot>
    <div className="ml-[114px] flex h-[38px] w-[62px] shrink-0 items-center justify-center rounded-tl-lg border-b border-l border-r border-t border-[#302848] border-l-[#c8c2dc] border-t-[#c8c2dc] bg-white/10">
      <svg width="32" height="30" viewBox="0 0 32 30" fill="none"><circle cx="14.500" cy="15.500" r="13.500" fill="#c82028" /><ellipse cx="13" cy="9" rx="9" ry="6" fill="#e87878" /><g stroke="#fff" strokeWidth="2.600"><path d="M5 13h5.500V7M8 8l3 4M16 5v6h4M5 18h6v6M7 23l4-4M22 20h-5v5M21 25l-4-4" /></g><circle cx="23" cy="7.500" r="7" fill="#f06838" stroke="#f8d0c0" strokeWidth="1.200" /><path d="M20 4.500l6 6m0-6l-6 6" stroke="#fff" strokeWidth="2.200" /></svg>
    </div>
    <svg width="112" height="24" viewBox="1159 736 112 24" fill="none" className="ml-[3px] shrink-0">
      <path d="M1162 751l4.500-5 4.500 5z" fill="#fff" stroke="#333" strokeWidth=".6" />
      <path d="M1185 742v15" stroke="#fff" strokeWidth="2" /><path d="M1187 743h5l1 2h5v7h-6l-1-1h-4z" fill="#fff" stroke="#444" strokeWidth=".6" /><circle cx="1194" cy="751.500" r="4.800" fill="#e02020" /><path d="M1192 749.500l4 4m0-4l-4 4" stroke="#fff" strokeWidth="1.500" />
      <path d="M1216 742h4v2h2v12h-8v-12h2z" fill="#fff" stroke="#333" strokeWidth=".8" /><path d="M1215.500 745.500h5v9h-5z" fill="#4a4a52" /><path d="M1216.500 750h3v3.500h-3z" fill="#fff" />
      <path d="M1231 748l2-1 1 1.500h4l-2-7 2 0 5 7h4c2 0 2 2 0 2h-4l-5 6.500h-2l2-6.500h-4l-1 1.500-2-.5z" fill="#fff" stroke="#444" strokeWidth=".5" />
      <path d="M1258 746h3l4-4v14l-4-4h-3z" fill="#fff" stroke="#333" strokeWidth=".6" /><path d="M1267 746c1.500 2 1.500 4 0 6" stroke="#fff" strokeWidth="1.300" />
    </svg>
    <div className={`ml-[14px] w-[66px] shrink-0 pt-px text-center text-[11.5px] leading-[17px] tracking-[-0.300px] text-white ${SEG}`}>
      <div>07:36</div><div>09/02/2018</div>
    </div>
  </div>
);

export default function App() {
  return (
    <div className="flex h-[768px] w-[1366px] flex-col overflow-hidden bg-[#444]">
      <TitleBar />
      <MenuBar />
      <MainToolbar />
      <Ribbon />
      <div className="flex h-[495px] shrink-0">
        <div className="flex w-[40px] shrink-0 flex-col bg-[#444]">
          <GripH box="ml-0.5 mt-px w-[35px]" />
          <div className="mt-[4px] flex flex-1 flex-col items-start border-r border-[#262626] bg-linear-to-r from-[#363636] to-[#2e2e2e]">
            <div className="ml-[10px] mt-[410px] flex h-5 w-5 items-center justify-center rounded-[3px] border border-[#2a2a2a] bg-[#505050]"><svg width="6" height="9" viewBox="0 0 6 9"><path d="M0 0l6 4.500L0 9z" fill="#ddd" /></svg></div>
            <div className="ml-1 mt-[11px] h-[44px] w-[35px] rounded-l bg-linear-to-b from-[#3a5a86] to-[#3a7ad0] pl-[3px] pt-[7px]">
              <div className="h-[28px] w-[31px] border-2 border-[#2c3848] bg-[#5c6878]" />
            </div>
          </div>
        </div>
        <SceneExplorer />
        <Viewport />
        <CommandPanel />
      </div>
      <Timeline />
      <StatusBar />
      <Taskbar />
    </div>
  );
}
